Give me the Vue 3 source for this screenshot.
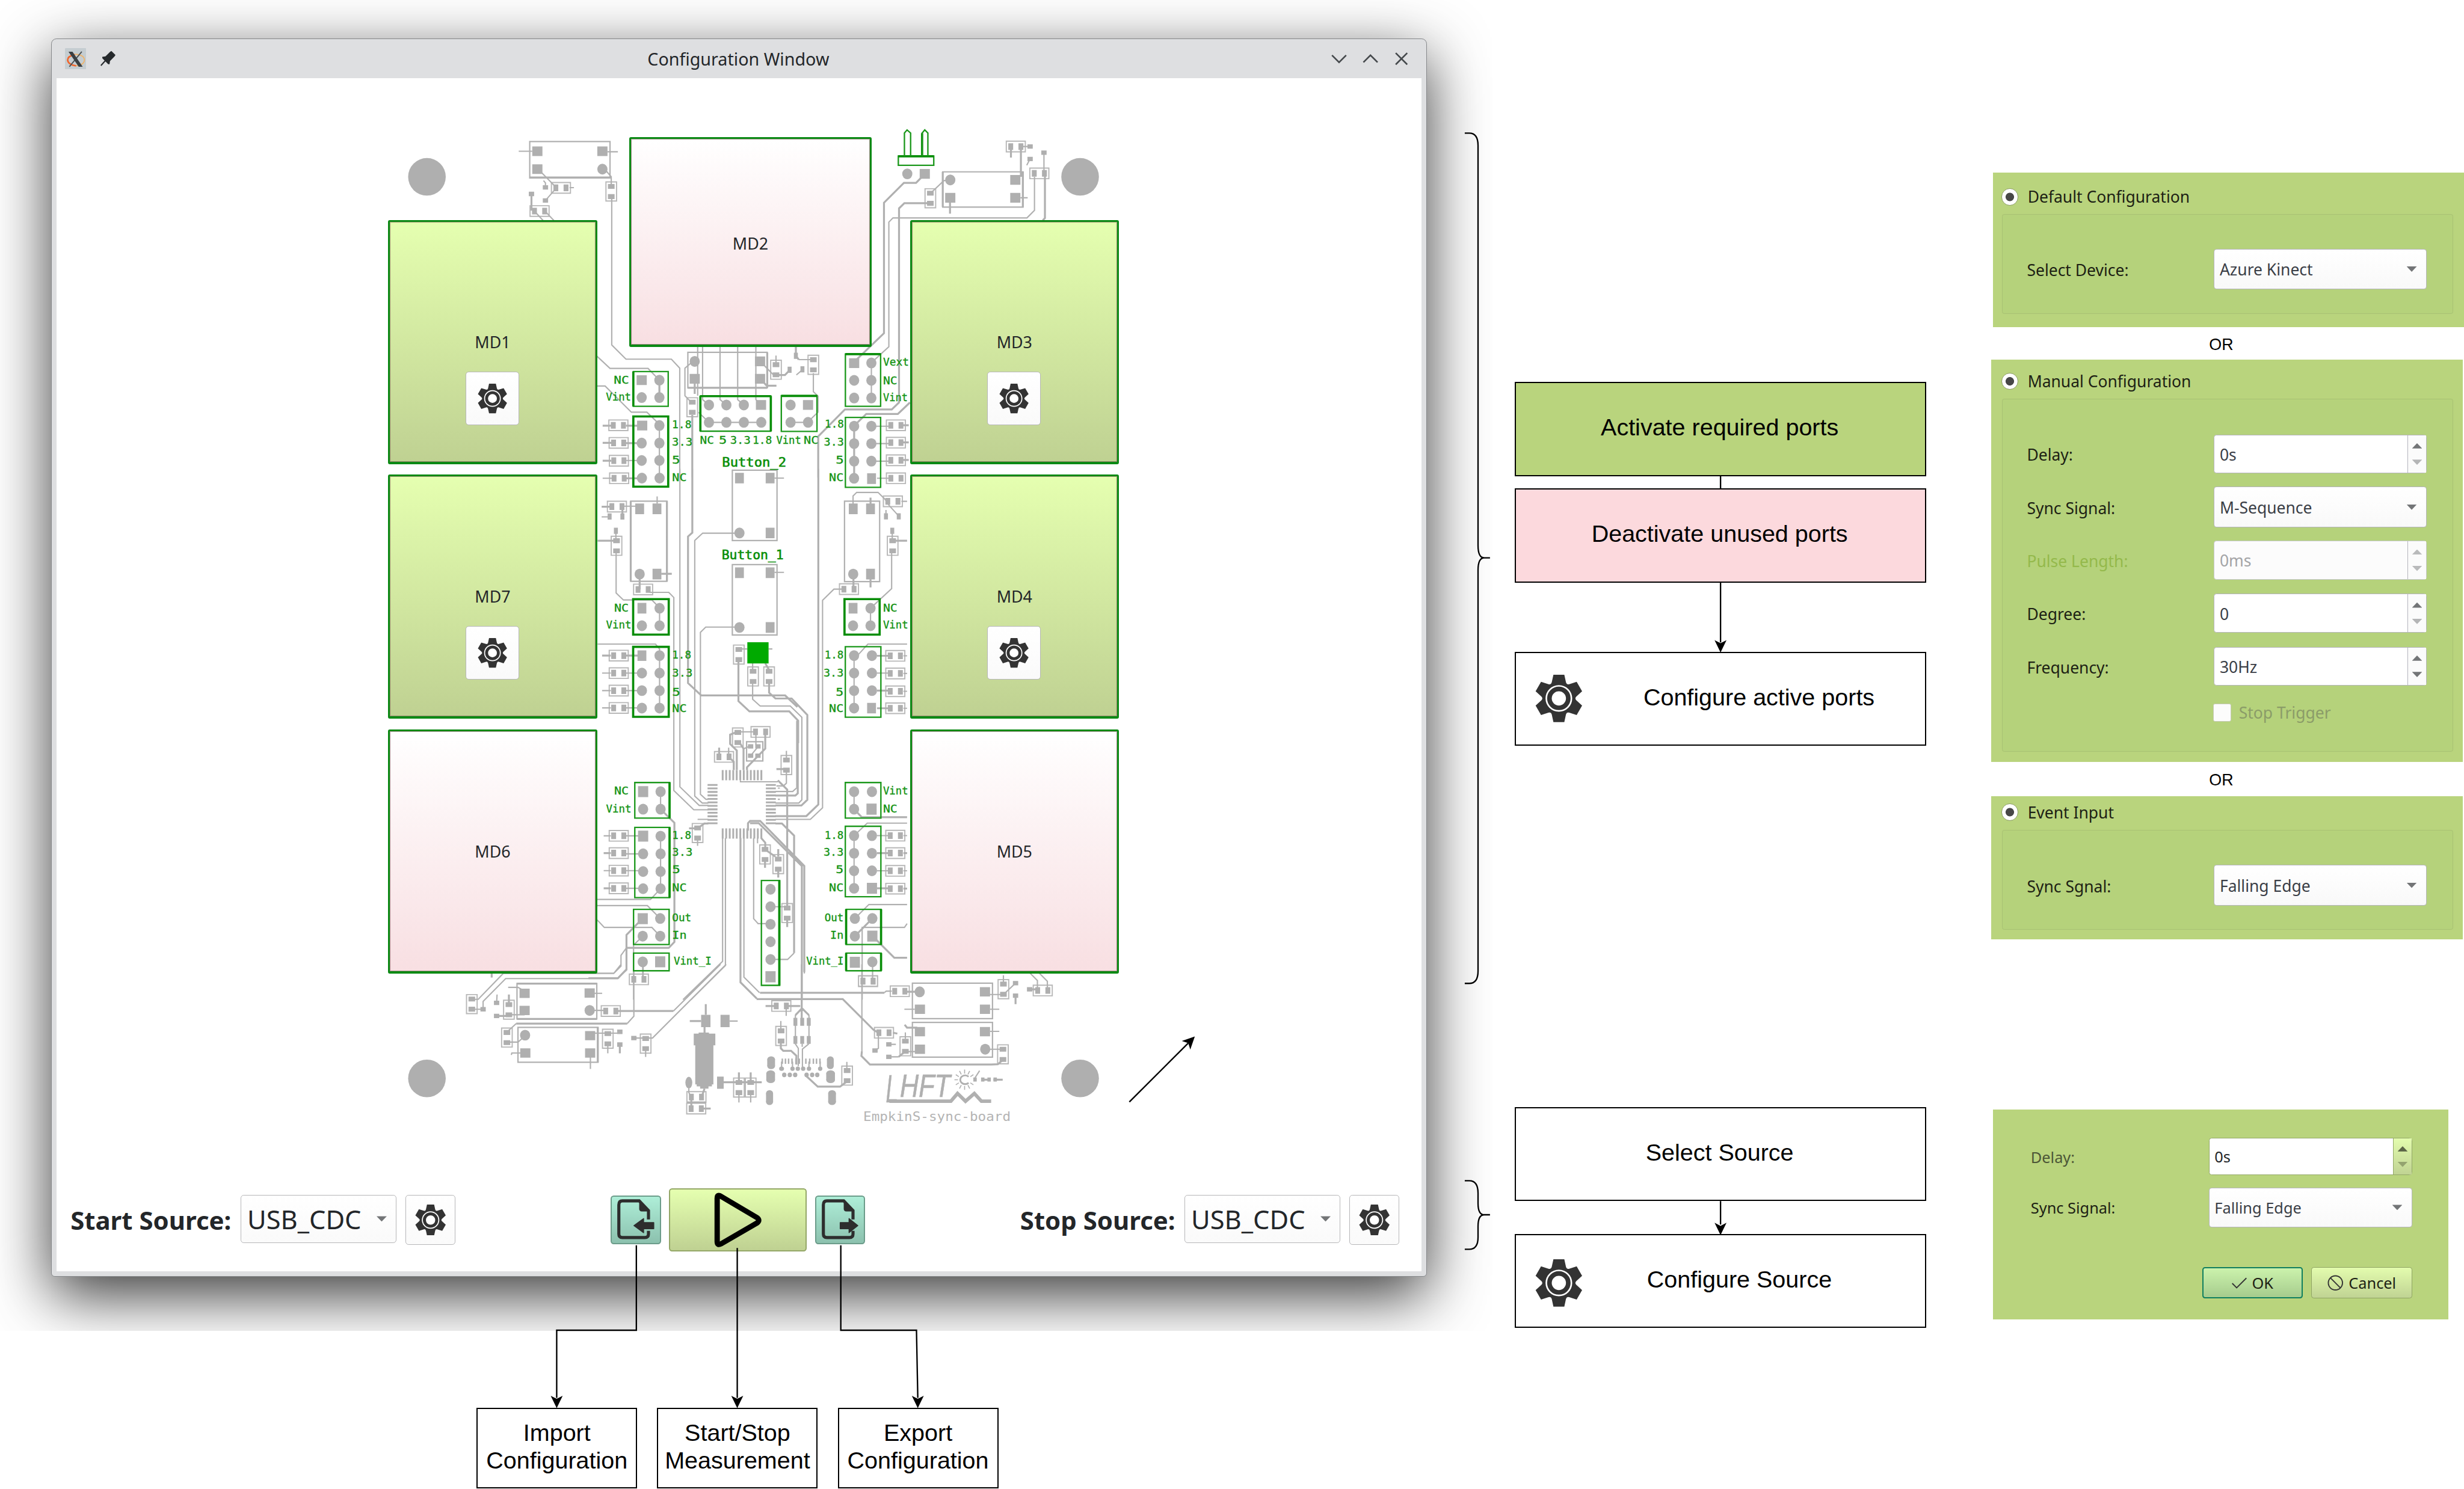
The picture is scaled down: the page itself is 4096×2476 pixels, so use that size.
<script setup>
import { h } from 'vue'

/* ---------- icons ---------- */
const gearPath = (() => {
  const at = (x, y, a) => {
    const c = Math.cos(a), s = Math.sin(a)
    return `${(50 + x * c - y * s).toFixed(1)} ${(50 + x * s + y * c).toFixed(1)}`
  }
  let d = ''
  for (let k = 0; k < 6; k++) {
    const a = (k * Math.PI) / 3
    d += (k ? 'L' : 'M') + at(-15, -34, a) + 'L' + at(-11.5, -50, a) + 'L' + at(11.5, -50, a) + 'L' + at(15, -34, a)
    d += 'Q' + at(0, -33, a + Math.PI / 6) + ' ' + at(-15, -34, a + Math.PI / 3)
  }
  return d + 'Z'
})()

const GearIcon = () =>
  h('svg', { viewBox: '0 0 100 100' }, [
    h('path', { d: gearPath, fill: '#333' }),
    h('circle', { cx: 50, cy: 50, r: 26.5, fill: 'none', stroke: '#fff', 'stroke-width': 3.4 }),
    h('circle', { cx: 50, cy: 50, r: 15, fill: '#fff' })
  ])

const FileIcon = (props) =>
  h('svg', { viewBox: '0 0 114 111' }, [
    h('path', {
      d: 'M87 80V87Q87 95 79 95H28Q20 95 20 87V21Q20 12 28 12H66L87 34V54',
      fill: 'none', stroke: '#2d2d2d', 'stroke-width': 7
    }),
    h('path', { d: 'M66 10L90 36H72Q66 36 66 30Z', fill: '#2d2d2d' }),
    h('path', {
      d: props.out ? 'M58 61H78V52L98 68L78 84V75H58Z' : 'M99 61H76V52L54 68L76 84V75H99Z',
      fill: '#2d2d2d', stroke: '#2d2d2d', 'stroke-width': 2, 'stroke-linejoin': 'round'
    })
  ])
FileIcon.props = { out: Boolean }

/* ---------- circuit board ---------- */
const board = { trace: '', bold: '', box: '', frame: '', green: '', thick: '', pad: '', dots: [], labels: [] }
const nums = (s) => (s || '').split(';').map((p) => p.trim()).filter(Boolean).map((p) => p.split(/[ ,]+/).map(Number))
const rect = (cx, cy, w, ht) => `M${cx - w / 2} ${cy - ht / 2}h${w}v${ht}h${-w}z`

/* every sheet has its own origin and grid pitch */
function sheet(ox, oy, sx, sy, d) {
  const X = (v) => +(ox + v * sx).toFixed(1)
  const Y = (v) => +(oy + v * sy).toFixed(1)
  const poly = (a) => {
    let s = ''
    for (let i = 0; i < a.length; i += 2) s += (i ? 'L' : 'M') + X(a[i]) + ' ' + Y(a[i + 1])
    return s
  }
  const frame = (a) => `M${X(a[0])} ${Y(a[1])}H${X(a[2])}V${Y(a[3])}H${X(a[0])}Z`
  nums(d.t).forEach((a) => (board.trace += poly(a)))
  nums(d.T).forEach((a) => (board.bold += poly(a)))
  nums(d.box).forEach((a) => (board.frame += frame(a)))
  nums(d.g).forEach((a) => (board.green += frame(a)))
  nums(d.G).forEach((a) => (board.thick += frame(a)))
  nums(d.fill).forEach((a) => (board.pad += frame(a)))
  nums(d.sq).forEach(([x, y]) => (board.pad += rect(X(x), Y(y), d.pw || 23, d.ph || 22)))
  nums(d.s).forEach(([x, y]) => (board.pad += rect(X(x), Y(y), 12, 10)))
  nums(d.sv).forEach(([x, y]) => (board.pad += rect(X(x), Y(y), 9, 14)))
  nums(d.dot).forEach(([x, y]) => board.dots.push({ x: X(x), y: Y(y), rx: 11.5, ry: 12.2 }))
  nums(d.el).forEach(([x, y, rx, ry]) => board.dots.push({ x: X(x), y: Y(y), rx: rx * sx, ry: ry * sy }))
  nums(d.h).forEach(([x, y]) => {
    const a = X(x), b = Y(y)
    board.box += rect(a, b, 43, 24)
    board.pad += rect(a - 11.5, b, 11, 15) + rect(a + 11.5, b, 11, 15)
  })
  nums(d.v).forEach(([x, y]) => {
    const a = X(x), b = Y(y)
    board.box += rect(a, b, 24, 43)
    board.pad += rect(a, b - 11.5, 15, 11) + rect(a, b + 11.5, 15, 11)
  })
  ;(d.l || []).forEach(([t, x1, x2, b]) =>
    board.labels.push({ t, x: X(x1) - 1.5, y: Y(b), w: +((x2 - x1) * sx + 3).toFixed(1) })
  )
}

sheet(860, 280, 0.5548, 0.5102, {
  box: '608 79 935 240; 1252 1013 1575 1170',
  sq: '639 122;904 122;639 201;1064 1136;1066 1337;1280 1130;1546 1053;1546 1130;1550 1246',
  dot: '904 201;1136 1136;1064 1213;1136 1213;1136 1337;1064 1415;1136 1415;1064 1492;1136 1492;1280 1053;1338 1246;1409 1246;1480 1246;1338 1323;1409 1323;1480 1323;1551 1323',
  s: '672 282;672 340;615 311',
  h: '735 284;648 387;969 1336;970 1414;971 1493',
  v: '940 300;1270 1256',
  t: '563 122 618 122;925 124 967 124;655 215 700 265 715 283;920 210 940 235 940 278;664 252 672 262 672 282;712 290 672 340;625 385 662 428;668 385 706 428;770 283 788 283;942 325 942 980 1000 1043 1185 1043 1219 1083 1219 1568;880 1028 935 1084 1090 1084 1135 1135;880 1162 915 1162 1022 1278 1085 1278 1135 1330;1292 985 1292 1205;1312 985 1312 1222 1338 1246;1383 985 1383 1222 1409 1246;1455 985 1455 1222 1480 1246;1529 985 1529 1222 1550 1246;1265 1060 1240 1083 1240 1205 1262 1230;1295 1278 1338 1323;1338 1323 1550 1323;1136 1337 1136 1560;1000 1492 1064 1492',
  T: '608 238 935 238;615 311 615 385;1252 1170 1575 1170;1280 1130 1280 1197;1270 1290 1270 1568;1136 1136 1136 1213;905 1338 940 1338;905 1414 940 1414;905 1493 940 1493;1000 1338 1064 1338;1000 1415 1064 1415',
  g: '1030 1098 1172 1252;1303 1206 1590 1362',
  G: '1030 1297 1172 1608;1303 1206 1303 1362;1303 1207 1590 1207;1590 1206 1590 1362;1030 1098 1030 1252',
  l: [['NC', 953, 1010, 1152], ['Vint', 921, 1018, 1227], ['1.8', 1190, 1264, 1350], ['3.3', 1190, 1268, 1427], ['5', 1190, 1218, 1507], ['NC', 1304, 1356, 1417], ['5', 1381, 1408, 1417], ['3.3', 1427, 1505, 1417], ['1.8', 1518, 1592, 1417]]
})
sheet(1700, 280, 0.5485, 0.5102, {
  box: '785 213 1116 369',
  sq: '711 222;1084 249;816 328;1084 328;420 1061;230 1246',
  dot: '639 222;816 249;491 1060;420 1137;491 1137;420 1215;491 1215;158 1246;158 1323;230 1323;420 1340;491 1340;420 1417;491 1417;420 1495;491 1495',
  s: '1145 101;1145 156;1202 128',
  sv: '154 1090;207 1088;180 1028',
  h: '1086 101;1183 220;592 1336;592 1413;592 1491',
  v: '734 330;98 1090;252 1068',
  t: '735 308 790 252 816 249;1105 328 1135 328;1107 101 1145 101;1145 156 1131 184;1202 128 1202 220;1163 235 1163 384 1132 417 580 417 563 436 563 988 500 1050;98 1027 98 1070;207 1090 182 1113;192 1045 250 1045;252 1105 252 1187 271 1207 271 1278 240 1310;158 1323 230 1323;33 1053 85 1110 98 1113;500 1340 570 1340;500 1417 570 1417;500 1495 570 1495;491 1060 491 1215',
  T: '695 240 675 262 625 262 543 350 543 928 425 1050;735 352 627 352 605 375 605 1235 575 1266 382 1266 272 1385 272 1568;815 340 815 398;1066 110 1066 150;1107 101 1107 235;1206 220 1206 418 1197 428;650 1235 600 1286 470 1286 420 1338;98 1113 135 1113 154 1092;180 988 180 1028 192 1045;33 1130 60 1161 100 1161;62 1013 62 1170;420 1340 420 1560;620 1336 645 1336;620 1412 645 1412;620 1490 645 1490;785 213 785 369;1115 213 1115 369',
  g: '384 1020 529 1252;120 1205 267 1363;384 1301 529 1611;602 143 748 184',
  G: '384 1021 529 1021;120 1206 267 1206;700 42 700 143;602 144 748 144',
  l: [['Vext', 542, 643, 1073], ['NC', 542, 595, 1153], ['Vint', 542, 638, 1230], ['1.8', 302, 375, 1347], ['3.3', 298, 375, 1426], ['5', 347, 375, 1507], ['Vint', 102, 199, 1417], ['NC', 215, 270, 1417]]
})
sheet(1330, 1060, 0.4592, 0.3954, {
  pw: 20, ph: 24,
  box: '208 185 386 643;708 8 928 410;708 548 928 950;1260 185 1433 645',
  sq: '252 229;337 229;337 602;743 53;894 53;894 367;743 594;894 594;894 907;263 797;263 1068;1303 229;1388 229;1388 602;1302 797;1393 56;1393 1368',
  dot: '252 602;743 367;743 907;263 53;350 53;350 797;263 897;350 897;350 1068;263 1168;350 1168;263 1268;350 1268;263 1368;350 1368;1303 602;1307 54;1388 797;1302 897;1388 897;1307 1068;1395 1068;1307 1168;1395 1168;1307 1268;1395 1268;1307 1368',
  sv: '104 273;167 273;135 354;1464 272;1527 272;1495 354',
  h: '151 54;140 216;269 690;149 1068;149 1168;149 1268;149 1367;1498 186;1282 688;1513 54;1510 1069;1510 1170;1510 1272;1510 1369',
  v: '138 440;740 1062;810 1187;889 1187;1497 440',
  t: '70 54 115 54;65 275 104 275;170 214 232 214;338 158 338 200;135 354 135 400;136 480 136 710 172 750 312 750 350 795;300 706 395 706 420 736 420 1568;450 0 450 1568;523 1568 523 410 562 368 743 368;551 1568 551 935 577 905 743 905;915 53 962 53;915 592 962 592;350 797 350 897;45 1002 330 1002 350 1030 350 1068;350 1068 350 1368;67 1168 110 1168;67 1268 110 1268;67 1367 110 1367;185 1168 263 1168;185 1268 263 1268;185 1367 263 1367;740 1030 782 1030;886 1030 905 1030;808 1112 808 1150;1302 229 1302 155 1320 135 1425 135 1460 175 1480 210 1527 270;1464 235 1464 272;1540 186 1568 186;1495 354 1495 400;1492 480 1492 685 1388 797;1255 688 1208 688 1152 752 1152 1568;1388 797 1388 897;1568 1002 1375 1002 1330 1060;1307 1068 1307 1368;1420 54 1480 54;1420 1168 1480 1168;1550 1069 1568 1069;1550 1170 1568 1170;1550 1272 1568 1272;1550 1369 1568 1369;808 1220 808 1318 845 1356 993 1356 1050 1420 1050 1568',
  T: '65 217 110 217;167 216 167 273;185 54 263 54;358 600 410 600;252 620 252 690;45 411 135 411;511 0 511 365 490 387 490 1225 555 1296 968 1296 1028 1362;67 1068 110 1068;185 1068 263 1068;738 1090 738 1328 792 1387 988 1387 1032 1440 1032 1568;870 1112 889 1150;889 1220 889 1280 920 1313 1000 1313 1077 1407 1077 1568;1388 165 1388 210;1304 600 1304 688;1388 620 1388 678;1497 411 1568 411;1131 0 1131 1568;1420 1069 1480 1069;1420 1268 1480 1268;1420 1369 1480 1369;208 185 208 643;386 185 386 643',
  g: '1264 1017 1439 1420',
  G: '220 745 395 948;220 1018 395 1418;1260 745 1433 948',
  l: [['NC', 415, 480, 70], ['NC', 1187, 1252, 70], ['NC', 130, 195, 815], ['Vint', 90, 208, 912], ['NC', 1453, 1517, 815], ['Vint', 1453, 1570, 912], ['1.8', 415, 502, 1085], ['3.3', 415, 509, 1187], ['5', 415, 449, 1297], ['NC', 415, 480, 1392], ['1.8', 1165, 1252, 1085], ['3.3', 1160, 1252, 1187], ['5', 1220, 1252, 1297], ['NC', 1187, 1252, 1392]]
})
const pins = (n, f) => Array.from({ length: n }, (_, i) => f(i)).join(';')
sheet(1330, 1600, 0.4592, 0.4209, {
  pw: 23, ph: 25,
  box: '778 183 858 286',
  fill: [
    pins(12, (i) => `${656 + i * 17.3} 335 ${665 + i * 17.3} 390`),
    pins(12, (i) => `${656 + i * 17.3} 648 ${665 + i * 17.3} 703`),
    pins(12, (i) => `586 ${410 + i * 18.7} 635 ${420 + i * 18.7}`),
    pins(12, (i) => `873 ${410 + i * 18.7} 922 ${420 + i * 18.7}`)
  ].join(';'),
  sq: '269 451;269 690;267 1133;353 1365;896 1445;1393 545;1395 970;1397 1227;1311 1367',
  dot: '355 451;269 545;355 545;355 690;269 785;355 785;269 880;355 880;269 972;355 972;353 1132;267 1227;353 1227;267 1365;896 975;896 1069;896 1163;896 1257;896 1352;1307 451;1395 451;1307 545;1307 687;1395 687;1307 782;1395 782;1307 876;1395 876;1307 970;1311 1132;1397 1132;1311 1227;1397 1365',
  s: '798 208;834 208;798 258;834 258',
  h: '847 130;667 264;149 688;149 781;149 875;149 970;248 1459;1510 687;1510 781;1510 876;1510 972;1376 1469',
  v: '735 160;974 308;537 673;869 788;934 840;978 1103',
  t: '420 0 420 445 518 548 590 548;450 0 450 425 545 525 590 525;523 0 523 475 560 512 590 512;551 0 551 465 578 492 590 492;920 450 1005 450 1025 430 1025 70;1050 50 1050 495 1035 512 920 512;1152 0 1152 538 1092 600 920 600;690 215 690 250;750 130 810 130;824 140 824 200;765 220 790 208;834 210 798 258;974 232 974 270;974 345 974 405 960 420 925 420;748 390 748 398 932 398;537 600 590 600;537 700 537 742;832 700 832 728;813 700 813 1133 835 1160 896 1160;355 451 355 545;355 690 355 972;75 875 110 875;75 688 110 688;185 688 265 688;185 785 265 785;185 875 265 875;185 970 265 970;355 972 305 1030 43 1030;43 1063 290 1063 353 1132;43 1140 78 1180 312 1180 353 1227;187 1290 160 1330 160 1388 125 1426 0 1426;267 1227 222 1275 222 1568;267 1365 267 1450;660 700 660 1362 465 1568;674 700 674 1385 505 1568;765 700 765 1447 842 1531;896 1352 980 1352 1012 1318;896 1069 978 1069;1307 451 1307 545;1307 687 1307 970;1307 687 1372 620 1568 620;1311 1132 1380 1057 1568 1057;1347 1568 1347 1180 1555 1180 1568 1160;1398 1365 1398 1460;1420 687 1480 687;1420 876 1480 876;932 432 942 432;932 492 942 492;1550 687 1568 687;1550 876 1568 876',
  T: '920 472 1018 472 1030 460 1030 70;1077 40 1077 495 1048 525 920 525;1131 0 1131 520 1072 582 920 582;643 215 643 250;700 275 715 290 715 335;720 135 697 145 697 195 730 230 730 335;745 190 763 220 763 335;870 140 870 220 780 320 780 335;925 330 960 330;932 390 978 440 978 1070;495 648 537 648;545 642 570 622 590 622;785 660 785 620 795 608 845 608 1062 850 1062 1420;795 620 838 620 1050 850 1050 1568;920 622 952 622 1012 687 1012 1318;850 700 870 725 870 760;880 770 920 800;869 820 869 860;934 760 934 800;934 870 934 912;355 545 423 618 423 1258 395 1290 187 1290;75 781 110 781;75 970 110 970;250 1150 187 1220 187 1405 145 1453 0 1453;748 700 748 1475 828 1562;978 1135 978 1178;1307 545 1345 588 1568 588;1311 1227 1397 1132;1410 1240 1505 1343 1568 1343;1420 781 1480 781;1420 970 1480 970;1550 781 1568 781;1550 972 1568 972',
  g: '228 402 400 593;228 643 400 1020;222 1083 397 1272;222 1318 397 1413;851 928 941 1491;1264 402 1439 593;1264 637 1439 1015;1268 1083 1440 1272;1268 1318 1440 1413',
  G: '1268 1083 1268 1272;1440 1083 1440 1272;1268 1318 1268 1413;1440 1318 1440 1413;399 402 399 593;399 643 399 1020;939 928 939 1491',
  l: [['NC', 130, 195, 465], ['Vint', 90, 208, 562], ['1.8', 415, 502, 705], ['3.3', 415, 509, 795], ['5', 415, 449, 890], ['NC', 415, 480, 985], ['Out', 415, 503, 1147], ['In', 415, 480, 1240], ['Vint_I', 423, 602, 1380], ['Vint', 1453, 1570, 465], ['NC', 1453, 1517, 562], ['1.8', 1165, 1252, 705], ['3.3', 1160, 1252, 795], ['5', 1220, 1252, 890], ['NC', 1187, 1252, 985], ['Out', 1165, 1252, 1147], ['In', 1193, 1252, 1240], ['Vint_I', 1075, 1252, 1380]]
})
sheet(860, 2180, 0.5548, 0.3333, {
  pw: 23, ph: 21,
  box: '556 130 881 371;560 428 886 665',
  fill: '1306 343 1344 426;1385 343 1422 426;1371 762 1398 845;1276 470 1364 550;1282 545 1356 815;1296 463 1338 472;1288 812 1350 828;1302 825 1336 843',
  sq: '587 197;852 195;587 313;854 484;590 602;854 602',
  dot: '852 313;589 481',
  el: '1256 803 14 40',
  s: '418 305;473 262;473 350;1032 500;975 458;975 545',
  v: '372 270;523 308;1080 538;515 497;926 505;1460 836;1508 836',
  h: '938 317;1287 900;1286 979',
  t: '980 0 950 62 500 62 398 238 372 238;1003 0 1003 38 965 97 510 97 418 252 418 305 372 305;520 157 560 157 575 170;870 197 903 197;475 205 473 262;523 342 587 342;860 313 910 313;1408 0 1108 500 1032 500;1080 570 1080 628;1032 40 1032 352 1005 402;515 528 560 528 589 485;533 615 535 602 570 602;870 467 975 467;926 535 926 604;855 630 855 710;1422 385 1455 385;1460 870 1460 937;1508 870 1508 937;1256 840 1256 870 1266 900;553 402 515 460;1070 0 1070 90;1193 317 1385 0',
  T: '453 60 453 90;556 131 881 131;556 371 881 371;473 350 523 350;523 205 523 270;965 317 1193 317;1005 402 553 402;885 428 885 665;975 545 975 604;1325 270 1325 343;1260 385 1306 385;1320 426 1320 470;1398 800 1553 800;1460 733 1460 800;1508 733 1508 800;1266 900 1266 979;1320 843 1308 900;1308 979 1345 979;1250 937 1325 937'
})
sheet(1700, 2180, 0.5485, 0.3333, {
  pw: 23, ph: 21,
  box: '660 128 990 369;660 394 990 630',
  fill:
    [178, 206, 233].map((x) => `${x - 8} 363 ${x + 8} 417;${x - 8} 487 ${x + 8} 540`).join(';') + ';' +
    [124, 137, 150, 164, 180, 194, 221, 237, 252, 265, 279].map((x) => `${x - 3} 640 ${x + 3} 675`).join(';') +
    ';62 645 94 690;58 740 94 785;57 875 86 933;308 645 336 690;305 740 341 785;313 875 345 933' +
    ';911 768 925 796;943 768 957 796;969 768 983 796;994 768 1008 796',
  sq: '959 187;691 305;959 305;691 457;959 457;691 576',
  dot: '690 187;960 576',
  el: '121 708 10 15;166 708 9 15;188 708 9 15;210 708 9 15;234 708 9 15;280 708 9 15;132 750 9 16;155 750 9 16;177 750 9 16;224 750 9 16;247 750 9 16;268 750 9 16;78 645 16 21;78 690 16 21;76 740 18 21;76 785 18 21;71.500 875 14.500 21;71.500 933 14.500 21;322 645 14 21;322 690 14 21;323 740 18 21;323 785 18 21;329 875 16 21;329 933 16 21',
  s: '1085 128;1085 213;1143 170;506 585;563 543;563 628',
  h: '120 283;477 113;608 183;1197 178;543 464',
  v: '119 486;391 755;1035 169;631 556;1033 611',
  t: '140 283 140 350;215 0 215 62;178 345 178 540 190 570 190 690;234 345 234 540;233 540 207 575 207 700;206 540 206 560;118 385 118 440;121 660 121 708;166 660 166 708;234 660 234 708;280 660 280 708;390 662 390 710;452 0 452 590;496 0 496 100;627 305 670 305;980 305 1018 305;975 205 1035 205;1035 75 1035 120;1035 205 1085 128;1145 60 1175 110 1175 165;1183 60 1216 115 1216 165;980 455 1018 455;520 480 520 570 506 585;563 543 592 543;563 628 603 628;631 462 631 505;631 592 691 592;975 576 1032 576;918 770 937 722;545 192 552 182 575 182',
  T: '32 193 545 193;18 236 373 236 500 445 520 465;55 283 95 283;140 283 198 283;204 0 204 390;204 300 178 345;206 300 234 345;118 530 118 570 128 587 160 587 182 620 182 680;224 760 270 830 362 830 390 795;452 590 450 622 485 680 985 680 1012 678 1032 650;635 186 690 186;1085 213 1085 270;1143 170 1175 170;628 410 638 430 680 430;580 464 598 470;603 628 630 592;945 783 983 783;994 783 1032 783'
})

const rays = Array.from({ length: 12 }, (_, i) => {
  const a = (i * Math.PI) / 6
  return `M${(2180 + 15 * Math.cos(a)).toFixed(1)} ${(2441 + 14 * Math.sin(a)).toFixed(1)}L${(2180 + 23 * Math.cos(a)).toFixed(1)} ${(2441 + 23 * Math.sin(a)).toFixed(1)}`
}).filter((_, i) => i !== 0).join('')

const holes = [[965, 400], [2441, 400], [965, 2438], [2441, 2438]]

const ports = [
  { name: 'MD1', key: 'md1', active: true },
  { name: 'MD2', key: 'md2', active: false },
  { name: 'MD3', key: 'md3', active: true },
  { name: 'MD7', key: 'md7', active: true },
  { name: 'MD4', key: 'md4', active: true },
  { name: 'MD6', key: 'md6', active: false },
  { name: 'MD5', key: 'md5', active: false }
]

/* ---------- settings panels ---------- */
const manualRows = [
  { label: 'Delay:', value: '0s', kind: 'spin' },
  { label: 'Sync Signal:', value: 'M-Sequence', kind: 'combo' },
  { label: 'Pulse Length:', value: '0ms', kind: 'spin', off: true },
  { label: 'Degree:', value: '0', kind: 'spin' },
  { label: 'Frequency:', value: '30Hz', kind: 'spin', both: true }
]

/* ---------- connectors ---------- */
const arrow = (x, y) => `M${x} ${y}l-13.5 -28l13.5 7l13.5 -7z`
</script>

<template>
  <div class="stage">
    <div class="shot">
      <section class="window">
        <header class="titlebar">
          <svg class="x-icon" viewBox="0 0 48 48">
            <rect width="48" height="48" rx="2" fill="#c5cdd1" />
            <ellipse cx="25" cy="27" rx="19" ry="13" fill="none" stroke="#efb36a" stroke-width="2.5" />
            <path d="M22 14.5Q6 18 6 27Q7 37 25 40" fill="none" stroke="#f0642d" stroke-width="3.5" />
            <path d="M38 8L10 42" stroke="#4a4f52" stroke-width="2.5" />
            <path d="M8 8H17L40 42H31Z" fill="#3a3f42" />
          </svg>
          <svg class="pin-icon" viewBox="0 0 34 34">
            <path d="M24 1L33 10L31 13L21 23L20 30L17 30L11 24L2 34L0 32L9 22L4 17L4 14L11 13L21 3Z" fill="#25292c" />
          </svg>
          <h1>Configuration Window</h1>
          <svg class="win-buttons" viewBox="0 0 178 40">
            <path d="M3 12L19 28L35 12M74 28L90 12L106 28M147 7L173 33M173 7L147 33" fill="none" stroke="#45494c" stroke-width="3.6" />
          </svg>
        </header>

        <main class="content">
          <div class="board">
            <svg class="pcb" viewBox="128 177 3082 2500">
              <path :d="board.frame" class="ln frame" />
              <path :d="board.box" class="ln small" />
              <path :d="board.trace" class="ln trace" />
              <path :d="board.bold" class="ln bold" />
              <path :d="board.pad" class="pad" />
              <ellipse v-for="(d, i) in board.dots" :key="i" class="pad" :cx="d.x" :cy="d.y" :rx="d.rx" :ry="d.ry" />
              <circle v-for="(p, i) in holes" :key="'h' + i" class="pad" :cx="p[0]" :cy="p[1]" r="42.5" />
              <path :d="board.green" class="ln green" />
              <path :d="board.thick" class="ln green thick" />
              <path class="ln green" d="M2044 353V301L2050 294L2058 301V353M2084 353V301L2090 294L2097 301V353" />
              <rect x="1689" y="1452" width="48" height="48" fill="#00aa00" />
              <text v-for="(l, i) in board.labels" :key="'l' + i" class="silk" :x="l.x" :y="l.y" :textLength="l.w" lengthAdjust="spacingAndGlyphs">{{ l.t }}</text>
              <text class="silk name" x="1632" y="1055" textLength="145" lengthAdjust="spacingAndGlyphs">Button_2</text>
              <text class="silk name" x="1631" y="1264" textLength="140" lengthAdjust="spacingAndGlyphs">Button_1</text>
              <g class="logo">
                <text x="2002" y="2492" font-size="88" textLength="28" lengthAdjust="spacingAndGlyphs">L</text>
                <text x="2034" y="2480" font-size="74" textLength="114" lengthAdjust="spacingAndGlyphs">HFT</text>
                <path d="M2010 2489.500H2149L2164 2472L2182 2489.500L2202 2472L2218 2489.500H2240" />
                <path d="M2189 2434A11 10 0 1 0 2189 2448" class="sun" />
                <path :d="rays" class="ray" />
              </g>
              <text class="board-name" x="1951" y="2534" textLength="333" lengthAdjust="spacingAndGlyphs">EmpkinS-sync-board</text>
            </svg>
            <div v-for="p in ports" :key="p.key" class="port" :class="[p.key, { active: p.active }]">
              <span class="port-name">{{ p.name }}</span>
              <button v-if="p.active" class="gear-button"><GearIcon /></button>
            </div>
          </div>

          <footer class="controls">
            <div class="source">
              <strong>Start Source:</strong>
              <div class="big-combo"><span>USB_CDC</span><i class="tri"></i></div>
              <button class="gear-button wide"><GearIcon /></button>
            </div>
            <div class="actions">
              <button class="file-button"><FileIcon /></button>
              <button class="play-button">
                <svg viewBox="0 0 311 141">
                  <path d="M109 21Q109 11 118 17L199 65Q207 71 199 77L118 124Q109 129 109 119Z" fill="none" stroke="#000" stroke-width="12" stroke-linejoin="round" />
                </svg>
              </button>
              <button class="file-button"><FileIcon out /></button>
            </div>
            <div class="source stop">
              <strong>Stop Source:</strong>
              <div class="big-combo"><span>USB_CDC</span><i class="tri"></i></div>
              <button class="gear-button wide"><GearIcon /></button>
            </div>
          </footer>
        </main>
      </section>
    </div>

    <svg class="connectors" viewBox="0 0 5568 3366">
      <g fill="none" stroke="#000" stroke-width="3.2">
        <path d="M3310 301H3320Q3340 301 3340 329V1233Q3340 1261 3354 1261H3367M3367 1261H3354Q3340 1261 3340 1289V2195Q3340 2223 3320 2223H3310" />
        <path d="M3310 2669H3320Q3340 2669 3340 2697V2720Q3340 2746 3354 2746H3367M3354 2746Q3340 2746 3340 2772V2797Q3340 2824 3320 2824H3310" />
        <path d="M1438 2815V3007H1258V3160" />
        <path d="M1666 2821V3160" />
        <path d="M1900 2815V3007H2071L2074 3160" />
        <path d="M3888 1075V1105M3888 1315V1452M3888 2715V2768" />
        <path d="M2552 2491L2685 2358" />
      </g>
      <path :d="arrow(1258, 3183) + arrow(1666, 3183) + arrow(2074, 3183) + arrow(3888, 1475) + arrow(3888, 2792)" />
      <path :d="arrow(0, 0)" transform="translate(2700 2343) rotate(-135)" />
    </svg>

    <div class="node import">Import<br />Configuration</div>
    <div class="node startstop">Start/Stop<br />Measurement</div>
    <div class="node export">Export<br />Configuration</div>

    <div class="node step activate">Activate required ports</div>
    <div class="node step deactivate">Deactivate unused ports</div>
    <div class="node step with-icon ports"><GearIcon /><span>Configure active ports</span></div>
    <div class="node step select">Select Source</div>
    <div class="node step with-icon conf"><GearIcon /><span>Configure Source</span></div>

    <aside class="panels">
      <section class="panel default">
        <h2><i class="radio"></i>Default Configuration</h2>
        <div class="group">
          <div class="row">
            <label>Select Device:</label>
            <div class="field combo"><span>Azure Kinect</span><i class="tri"></i></div>
          </div>
        </div>
      </section>
      <p class="or">OR</p>
      <section class="panel manual">
        <h2><i class="radio"></i>Manual Configuration</h2>
        <div class="group">
          <div v-for="r in manualRows" :key="r.label" class="row" :class="{ off: r.off }">
            <label>{{ r.label }}</label>
            <div class="field" :class="r.kind">
              <span>{{ r.value }}</span>
              <i v-if="r.kind === 'combo'" class="tri"></i>
              <div v-else class="steps"><i class="tri up"></i><i class="tri" :class="{ dim: !r.both }"></i></div>
            </div>
          </div>
          <div class="check"><i></i>Stop Trigger</div>
        </div>
      </section>
      <p class="or second">OR</p>
      <section class="panel event">
        <h2><i class="radio"></i>Event Input</h2>
        <div class="group">
          <div class="row">
            <label>Sync Sgnal:</label>
            <div class="field combo"><span>Falling Edge</span><i class="tri"></i></div>
          </div>
        </div>
      </section>
      <section class="panel dialog">
        <div class="row soft">
          <label>Delay:</label>
          <div class="field spin lime">
            <span>0s</span>
            <div class="steps"><i class="tri up"></i><i class="tri dim"></i></div>
          </div>
        </div>
        <div class="row">
          <label>Sync Signal:</label>
          <div class="field combo"><span>Falling Edge</span><i class="tri"></i></div>
        </div>
        <div class="dialog-buttons">
          <button class="ok">
            <svg viewBox="0 0 34 28"><path d="M1 15L11 25L33 3" fill="none" stroke="#333" stroke-width="2.6" /></svg>OK
          </button>
          <button class="cancel">
            <svg viewBox="0 0 36 36"><circle cx="18" cy="18" r="16" /><path d="M7 7L29 29" /></svg>Cancel
          </button>
        </div>
      </section>
    </aside>
  </div>
</template>

<style>
body {
  background: #fff;
  overflow: hidden;
}
</style>

<style scoped>
.stage {
  position: relative;
  width: 5568px;
  height: 3366px;
  zoom: 0.73563;
  overflow: hidden;
  background: #fff;
  font-family: 'Noto Sans', sans-serif;
  color: #232629;
}
.stage * {
  box-sizing: border-box;
}
svg {
  display: block;
}
button {
  padding: 0;
  font: inherit;
  color: inherit;
}

/* window */
.shot {
  width: 3372px;
  height: 3008px;
  padding: 87px 0 0 115px;
  overflow: hidden;
}
.window {
  width: 3109px;
  height: 2799px;
  border: 2px solid #85878a;
  border-radius: 12px 12px 8px 8px;
  background: #dedfe1;
  padding: 0 11px 11px;
  display: flex;
  flex-direction: column;
  box-shadow: 0 42px 136px rgba(0, 0, 0, 0.78);
}
.titlebar {
  height: 88px;
  flex: none;
  display: flex;
  align-items: center;
}
.x-icon {
  width: 48px;
  height: 48px;
  margin-left: 19px;
}
.pin-icon {
  width: 35px;
  height: 35px;
  margin-left: 33px;
}
.titlebar h1 {
  margin: 0;
  flex: 1;
  text-align: center;
  font-size: 39px;
  font-weight: 400;
  padding-left: 68px;
}
.win-buttons {
  width: 178px;
  height: 40px;
  margin-right: 27px;
}
.content {
  flex: 1;
  background: #fff;
  display: flex;
  flex-direction: column;
}
.board {
  position: relative;
  height: 2500px;
}
.pcb {
  width: 3082px;
  height: 2500px;
}
.ln {
  fill: none;
  stroke: #b0b0b0;
}
.frame {
  stroke-width: 3;
}
.small {
  stroke: #b8b8b8;
  stroke-width: 2.6;
}
.trace {
  stroke-width: 2.9;
}
.bold {
  stroke-width: 4.4;
}
.pad {
  fill: #afafaf;
}
.green {
  stroke: #1c981c;
  stroke-width: 3.2;
}
.green.thick {
  stroke: #088d08;
  stroke-width: 5;
}
.silk {
  fill: #149414;
  stroke: #149414;
  stroke-width: 0.5;
  font: 24px 'DejaVu Sans Mono', monospace;
}
.silk.name {
  font-size: 28px;
  fill: #0a8f0a;
  stroke: #0a8f0a;
  stroke-width: 0.9;
}
.board-name {
  font: 28px 'DejaVu Sans Mono', monospace;
  fill: #b4b4b4;
}
.logo text {
  font-family: 'Liberation Sans', sans-serif;
  font-style: italic;
  fill: #b0b0b0;
  stroke: #b0b0b0;
}
.logo path {
  fill: none;
  stroke: #b0b0b0;
  stroke-width: 8;
}
.logo .sun {
  stroke-width: 4;
}
.logo .ray {
  stroke-width: 2.2;
}

.port {
  position: absolute;
  width: 472px;
  height: 552px;
  border: 4.500px solid #0b8a14;
  border-bottom-width: 6px;
  box-shadow: inset 0 0 0 1.500px rgba(110, 70, 70, 0.55);
  border-radius: 4px;
  background: linear-gradient(#fff, #f8dfe2);
  display: grid;
  grid-template-rows: 1fr auto 1fr;
  justify-items: center;
  font-size: 36.500px;
}
.port.active {
  background: linear-gradient(#e5ffb0, #bfd192);
}
.port-name {
  grid-row: 2;
  line-height: 50px;
  margin-top: 4px;
}
.port .gear-button {
  grid-row: 3;
  margin-top: 41px;
  margin-right: 2px;
}
.md1, .md7, .md6 { left: 750px; }
.md3, .md4, .md5 { left: 1929px; }
.md1, .md3 { top: 321px; }
.md7, .md4 { top: 896px; }
.md6, .md5 { top: 1472px; }
.md2 {
  left: 1295px;
  top: 134px;
  width: 547px;
  height: 474px;
}
.md2 .port-name {
  margin-top: 8px;
}
.gear-button {
  width: 121px;
  height: 121px;
  border: 2.500px solid #b6b6b8;
  border-radius: 7px;
  background: linear-gradient(#fff, #fafafa);
  display: flex;
  align-items: center;
  justify-content: center;
}
.gear-button svg {
  width: 67px;
  height: 67px;
}
.gear-button.wide {
  width: 113px;
  height: 112px;
}
.gear-button.wide svg {
  width: 70px;
  height: 70px;
}

.controls {
  height: 162px;
  display: flex;
  align-items: center;
}
.source {
  display: flex;
  align-items: flex-start;
  margin-left: 32px;
  width: 872px;
}
.source strong {
  width: 384px;
  font-size: 57px;
  line-height: 114px;
  height: 112px;
  white-space: nowrap;
}
.source.stop {
  margin-left: 350px;
}
.source.stop strong {
  width: 371px;
}
.big-combo {
  width: 353px;
  height: 108px;
  border: 2.500px solid #b6b6b8;
  border-radius: 7px;
  background: linear-gradient(#fff, #fafafa);
  padding: 0 21px 0 14px;
  display: flex;
  align-items: center;
  justify-content: space-between;
  font-size: 59px;
  margin-right: 20px;
}
.big-combo span {
  padding-top: 3px;
}
.tri {
  width: 23px;
  height: 12px;
  background: #737577;
  clip-path: polygon(0 0, 100% 0, 50% 100%);
}
.tri.up {
  clip-path: polygon(0 100%, 100% 100%, 50% 0);
}
.actions {
  display: flex;
  align-items: center;
  gap: 18px;
  margin-left: 348px;
}
.file-button {
  width: 114px;
  height: 111px;
  border: 3px solid #6c9c8a;
  border-radius: 7px;
  background: linear-gradient(#aeeed8, #8cc1ae);
  overflow: hidden;
}
.file-button svg {
  width: 114px;
  height: 111px;
  margin: -3px;
}
.play-button {
  width: 312px;
  height: 142px;
  border: 3px solid #94a768;
  border-radius: 7px;
  background: linear-gradient(#e5ffb0, #bfd192);
}
.play-button svg {
  width: 311px;
  height: 141px;
  margin: -3px;
}

/* diagram */
.connectors {
  position: absolute;
  left: 0;
  top: 0;
  width: 5568px;
  height: 3366px;
}
.node {
  position: absolute;
  border: 3.200px solid #000;
  background: #fff;
  color: #000;
  font-family: 'Liberation Sans', sans-serif;
  font-size: 53.700px;
  line-height: 63px;
  text-align: center;
  top: 3182px;
  width: 363px;
  height: 183px;
  padding-top: 22px;
}
.import { left: 1077px; }
.startstop { left: 1485px; }
.export { left: 1893px; }
.step {
  left: 3423px;
  width: 930px;
  height: 213px;
  padding: 0 4px 8px 0;
  display: flex;
  align-items: center;
  justify-content: center;
}
.activate {
  top: 863px;
  background: #b9d47d;
}
.deactivate {
  top: 1104px;
  background: #fcd9dd;
}
.ports { top: 1473px; }
.select { top: 2502px; }
.conf { top: 2789px; }
.with-icon {
  justify-content: flex-start;
  padding-left: 43px;
}
.with-icon svg {
  width: 107px;
  height: 107px;
  margin-top: 6px;
}
.conf svg {
  margin-top: 18px;
}
.with-icon span {
  margin-left: 138px;
}
.conf span {
  margin-left: 146px;
}

/* settings */
.panels {
  position: absolute;
  left: 4500px;
  top: 390px;
  width: 1068px;
  font-size: 36px;
  color: #1d2114;
}
.panel {
  background: #b9d47d;
  width: 1065px;
  padding: 0 21px 0 24px;
  overflow: hidden;
}
.panel h2 {
  margin: 0;
  height: 50px;
  font-size: 36px;
  font-weight: 400;
  display: flex;
  align-items: center;
}
.radio {
  width: 39px;
  height: 39px;
  margin: 0 21px 0 -2px;
  border-radius: 50%;
  border: 2.500px solid #8c9d66;
  background: radial-gradient(circle, #474747 0 9px, #fff 10px);
}
.group {
  border: 2.500px solid #a8c173;
  border-radius: 5px;
  background: #b5d27b;
  padding: 0 59px 0 55px;
}
.row {
  height: 120px;
  display: flex;
  align-items: center;
}
.row label {
  flex: 1;
  padding-top: 4px;
}
.field {
  width: 481px;
  height: 92px;
  border: 2.500px solid #b4b4bc;
  border-radius: 6px;
  background: linear-gradient(#fff, #f9f9f9);
  color: #3a3e46;
  display: flex;
  align-items: center;
  justify-content: space-between;
  padding-left: 12px;
}
.field span {
  padding-top: 2px;
}
.combo .tri {
  margin-right: 21px;
}
.spin {
  height: 88px;
  background: #fff;
}
.steps {
  width: 42px;
  height: 100%;
  border-left: 2px solid #b4b4bc;
  background: #fbfbfb;
  display: flex;
  flex-direction: column;
  align-items: center;
  justify-content: center;
  gap: 25px;
}
.tri.dim {
  background: #b4b5b6;
}
.off label {
  color: #94b94b;
}
.off .field {
  color: #a3a4a6;
  border-color: #c6c8cc;
  background: #fcfcfc;
}
.off .tri {
  background: #b9babb;
}
.default {
  width: 1065px;
  margin-left: 3px;
  height: 350px;
  padding: 30px 24px 0 21px;
}
.default .group {
  margin-top: 14px;
  height: 226px;
  padding-top: 63px;
}
.or {
  margin: 0;
  height: 73px;
  padding-left: 492px;
  line-height: 79px;
  font-family: 'Liberation Sans', sans-serif;
  font-size: 36.500px;
  color: #000;
}
.or.second {
  height: 78px;
  line-height: 82px;
}
.manual {
  height: 909px;
  padding-top: 24px;
}
.manual .group {
  margin-top: 14px;
  height: 798px;
  padding-top: 64px;
}
.check {
  display: flex;
  align-items: center;
  height: 50px;
  margin-top: 20px;
  padding-left: 421px;
  color: #8b9c68;
}
.check i {
  width: 41px;
  height: 41px;
  margin-right: 17px;
  background: #fcfcfc;
  border: 2.500px solid #c6cab8;
  border-radius: 4px;
}
.event {
  height: 324px;
  padding-top: 11px;
}
.event .group {
  margin-top: 15px;
  height: 225px;
  padding-top: 64px;
}
.dialog {
  margin: 384px 0 0 3px;
  width: 1030px;
  height: 474px;
  padding: 49px 82px 0 86px;
  font-size: 34.500px;
}
.dialog .row {
  height: 115px;
}
.dialog .row label {
  padding-top: 1px;
}
.dialog .field {
  width: 460px;
  height: 89px;
}
.dialog .field span {
  padding-top: 0;
}
.dialog .soft label {
  color: #4c5637;
}
.dialog .lime {
  height: 84px;
  border-color: #92a766;
  color: #232629;
}
.lime .steps {
  background: linear-gradient(#e3fcae, #c0d393);
  border-color: #92a766;
  gap: 23px;
}
.lime .tri {
  background: #5b6446;
}
.lime .tri.dim {
  background: #94a36f;
}
.dialog-buttons {
  display: flex;
  justify-content: flex-end;
  gap: 19px;
  margin-top: 77px;
}
.dialog-buttons button {
  width: 228px;
  height: 71px;
  border: 2.500px solid #8fa463;
  border-radius: 6px;
  background: linear-gradient(#e3fcae, #c0d393);
  display: flex;
  align-items: center;
  justify-content: center;
  gap: 12px;
}
.dialog-buttons .ok {
  border: 3.500px solid #0f7f5f;
  background: linear-gradient(#cbf2ac, #a6cc8d);
}
.ok svg {
  width: 34px;
  height: 28px;
}
.cancel svg {
  width: 36px;
  height: 36px;
  fill: none;
  stroke: #333;
  stroke-width: 2.6;
}
</style>
